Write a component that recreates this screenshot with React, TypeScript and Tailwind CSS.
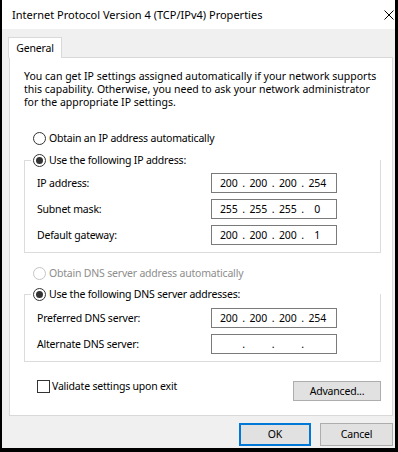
import React from 'react';

type RadioProps = { checked?: boolean; disabled?: boolean };

const Radio = ({ checked, disabled }: RadioProps) => (
  <span
    className={`w-[13px] h-[13px] shrink-0 rounded-full border bg-white flex items-center justify-center ${
      disabled ? 'border-[#c4c4c4]' : 'border-[#333333]'
    }`}
  >
    {checked && <span className="w-[7px] h-[7px] rounded-full bg-[#333333]" />}
  </span>
);

const IpField = ({ segs }: { segs: string[] }) => (
  <div className="w-[126px] h-[20px] border border-[#7a7a7a] bg-white flex items-center pl-[5px]">
    {segs.map((s, i) => (
      <React.Fragment key={i}>
        <span className="w-[23.5px] text-center">{s}</span>
        {i < 3 && <span className="w-[6px] text-center">.</span>}
      </React.Fragment>
    ))}
  </div>
);

const FieldRow = ({ label, segs }: { label: string; segs: string[] }) => (
  <div className="flex items-center h-[20px]">
    <span className="w-[174px]">{label}</span>
    <IpField segs={segs} />
  </div>
);

const Legend = ({ text }: { text: string }) => (
  <div className="-mt-[9px] ml-[6px] self-start bg-white pl-[2px] pr-[2px] h-[16px] flex items-center gap-[3px]">
    <Radio checked />
    <span>{text}</span>
  </div>
);

const App = () => {
  return (
    <div className="w-[398px] h-[452px] bg-black pl-[2px] pr-[3px] font-['Noto_Sans',sans-serif] text-[10.5px] tracking-[-0.2px] leading-[13px] text-black">
      <div className="h-[448px] bg-[#f0f0f0] flex flex-col">
        {/* title bar */}
        <div className="h-[29px] bg-white flex items-center justify-between pl-[10px] pr-[1px]">
          <span className="text-[11px] tracking-normal">Internet Protocol Version 4 (TCP/IPv4) Properties</span>
          <svg width="10" height="10" viewBox="0 0 10 10">
            <path d="M0.5 0.5 L9.5 9.5 M9.5 0.5 L0.5 9.5" stroke="#000" strokeWidth="1" />
          </svg>
        </div>

        {/* tab */}
        <div className="mt-[8px] ml-[6px] w-[54px] h-[21px] bg-white border border-b-0 border-[#d9d9d9] flex items-center justify-center relative z-10 -mb-[1px]">
          General
        </div>

        {/* panel */}
        <div className="ml-[7px] w-[384px] h-[359px] bg-white border border-[#d9d9d9] pl-[14px] pt-[12px] flex flex-col">
          <div className="whitespace-nowrap tracking-normal">
            <div className="h-[13px]">You can get IP settings assigned automatically if your network supports</div>
            <div className="h-[13px]">this capability. Otherwise, you need to ask your network administrator</div>
            <div className="h-[13px]">for the appropriate IP settings.</div>
          </div>

          <div className="mt-[21px] ml-[9px] h-[16px] flex items-center gap-[3px]">
            <Radio />
            <span>Obtain an IP address automatically</span>
          </div>

          <div className="mt-[14px] w-[357px] border border-[#dcdcdc] flex flex-col pl-[12px] pb-[7px]">
            <div className="-ml-[12px]">
              <Legend text="Use the following IP address:" />
            </div>
            <div className="mt-[5px] flex flex-col gap-[6px]">
              <FieldRow label="IP address:" segs={['200', '200', '200', '254']} />
              <FieldRow label="Subnet mask:" segs={['255', '255', '255', '0']} />
              <FieldRow label="Default gateway:" segs={['200', '200', '200', '1']} />
            </div>
          </div>

          <div className="mt-[12px] ml-[9px] h-[16px] flex items-center gap-[3px] text-[#8d8d8d]">
            <Radio disabled />
            <span>Obtain DNS server address automatically</span>
          </div>

          <div className="mt-[13px] w-[357px] border border-[#dcdcdc] flex flex-col pl-[12px] pb-[7px]">
            <div className="-ml-[12px]">
              <Legend text="Use the following DNS server addresses:" />
            </div>
            <div className="mt-[6px] flex flex-col gap-[6px]">
              <FieldRow label="Preferred DNS server:" segs={['200', '200', '200', '254']} />
              <FieldRow label="Alternate DNS server:" segs={['', '', '', '']} />
            </div>
          </div>

          <div className="mt-[16px] w-[357px] flex justify-between items-start">
            <div className="ml-[13px] h-[16px] flex items-center gap-[2px]">
              <span className="w-[13px] h-[13px] border border-[#333333] bg-white" />
              <span>Validate settings upon exit</span>
            </div>
            <button className="mt-[3px] w-[88px] h-[20px] bg-[#e1e1e1] border border-[#adadad] flex items-center justify-center">
              Advanced...
            </button>
          </div>
        </div>

        {/* footer buttons */}
        <div className="mt-[7px] flex justify-end gap-[9px] pr-[2px]">
          <button className="w-[72px] h-[23px] bg-[#e1e1e1] border-2 border-[#0078d7] flex items-center justify-center">
            OK
          </button>
          <button className="w-[73px] h-[23px] bg-[#e1e1e1] border border-[#adadad] flex items-center justify-center">
            Cancel
          </button>
        </div>
      </div>
    </div>
  );
};

export default App;
